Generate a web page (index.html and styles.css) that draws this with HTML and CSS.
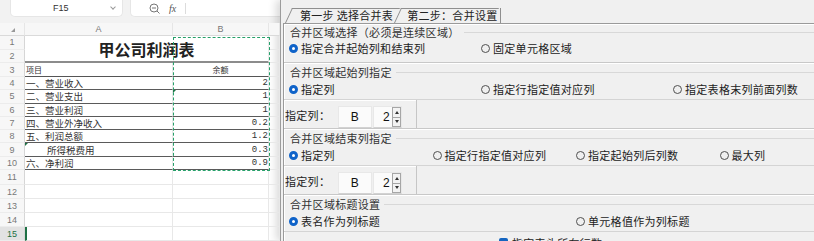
FILE: index.html
```html
<!DOCTYPE html>
<html lang="zh-CN">
<head>
  <meta charset="UTF-8" />
  <meta name="viewport" content="width=device-width, initial-scale=1.0"/>
  <title>合并设置</title>
  <link rel="stylesheet" href="styles.css">
</head>
<body>

  <!-- spreadsheet behind the dialog -->
  <div class="sheet">
    <div class="toolbar">
      <div class="namebox">
        <span>F15</span>
        <span class="chev"></span>
      </div>
      <div class="formula">
        <svg class="zoom-icon" width="11" height="11" viewBox="0 0 11 11">
          <circle cx="5" cy="5" r="4" />
          <line x1="3" y1="5" x2="7" y2="5" />
          <line x1="8" y1="8" x2="10.5" y2="10.5" />
        </svg>
        <span class="fx">fx</span>
        <span class="bar"></span>
      </div>
    </div>

    <div class="grid">
      <div class="corner"><span class="tri"></span></div>
      <div class="colhead">A</div>
      <div class="colhead">B</div>
      <div class="colhead"></div>

      <div class="rh">1</div>
      <div class="cell title">甲公司利润表</div>
      <div class="cell"></div>
      <div class="rh">2</div>
      <div class="cell"></div>

      <div class="rh">3</div>
      <div class="cell head">项目</div>
      <div class="cell head center">余额</div>
      <div class="cell"></div>

      <div class="rh">4</div>
      <div class="cell line">一、营业收入</div>
      <div class="cell line num">2</div>
      <div class="cell"></div>

      <div class="rh">5</div>
      <div class="cell line">二、营业支出</div>
      <div class="cell line num mark">1</div>
      <div class="cell"></div>

      <div class="rh">6</div>
      <div class="cell line">三、营业利润</div>
      <div class="cell line num">1</div>
      <div class="cell"></div>

      <div class="rh">7</div>
      <div class="cell line">四、营业外净收入</div>
      <div class="cell line num">0.2</div>
      <div class="cell"></div>

      <div class="rh">8</div>
      <div class="cell line">五、利润总额</div>
      <div class="cell line num">1.2</div>
      <div class="cell"></div>

      <div class="rh">9</div>
      <div class="cell line indent mark">所得税费用</div>
      <div class="cell line num">0.3</div>
      <div class="cell"></div>

      <div class="rh">10</div>
      <div class="cell line">六、净利润</div>
      <div class="cell line num">0.9</div>
      <div class="cell"></div>

      <div class="rh">11</div><div class="cell"></div><div class="cell"></div><div class="cell"></div>
      <div class="rh">12</div><div class="cell"></div><div class="cell"></div><div class="cell"></div>
      <div class="rh">13</div><div class="cell"></div><div class="cell"></div><div class="cell"></div>
      <div class="rh">14</div><div class="cell"></div><div class="cell"></div><div class="cell"></div>
      <div class="rh sel">15</div><div class="cell active-row"></div><div class="cell"></div><div class="cell"></div>

      <div class="marquee"></div>
    </div>
  </div>

  <!-- merge wizard -->
  <div class="dialog">
    <div class="tabs">
      <div class="tab">第一步 选择合并表</div>
      <div class="tab active">第二步：合并设置</div>
    </div>

    <div class="panel">
      <div class="group first">
        <div class="legend">合并区域选择（必须是连续区域）</div>
        <div class="opts cols3">
          <label class="radio"><span class="dot on"></span>指定合并起始列和结束列</label>
          <label class="radio"><span class="dot"></span>固定单元格区域</label>
        </div>
      </div>

      <div class="group">
        <div class="legend">合并区域起始列指定</div>
        <div class="opts cols3">
          <label class="radio"><span class="dot on"></span>指定列</label>
          <label class="radio"><span class="dot"></span>指定行指定值对应列</label>
          <label class="radio"><span class="dot"></span>指定表格末列前面列数</label>
        </div>
        <div class="subrow">
          <div class="field">
            <span class="flabel">指定列：</span>
            <span class="input col">B</span>
            <span class="input num">2<span class="spin"><i class="up"></i><i class="down"></i></span></span>
          </div>
        </div>
      </div>

      <div class="group">
        <div class="legend">合并区域结束列指定</div>
        <div class="opts cols4">
          <label class="radio"><span class="dot on"></span>指定列</label>
          <label class="radio"><span class="dot"></span>指定行指定值对应列</label>
          <label class="radio"><span class="dot"></span>指定起始列后列数</label>
          <label class="radio"><span class="dot"></span>最大列</label>
        </div>
        <div class="subrow">
          <div class="field">
            <span class="flabel">指定列：</span>
            <span class="input col">B</span>
            <span class="input num">2<span class="spin"><i class="up"></i><i class="down"></i></span></span>
          </div>
        </div>
      </div>

      <div class="group">
        <div class="legend">合并区域标题设置</div>
        <div class="opts cols2">
          <label class="radio"><span class="dot on"></span>表名作为列标题</label>
          <label class="radio"><span class="dot"></span>单元格值作为列标题</label>
        </div>
        <div class="subrow check">
          <span class="cb"></span>
          <span class="cb-text">指定表头所在行数</span>
        </div>
      </div>
    </div>
  </div>

</body>
</html>
```

FILE: styles.css
```css
body {
  margin: 0;
  width: 814px;
  height: 241px;
  overflow: hidden;
  display: flex;
  font-family: "Noto Sans CJK SC", sans-serif;
  background: #fff;
}

/* ---------- spreadsheet ---------- */

.sheet {
  width: 280px;
  flex: none;
  overflow: hidden;
  background: #fff;
}

.toolbar {
  height: 23px;
  display: flex;
  background: #f2f2f2;
}

.namebox {
  margin-left: 10px;
  width: 113px;
  height: 17px;
  box-sizing: border-box;
  display: flex;
  align-items: center;
  padding-left: 42px;
  background: #fff;
  border: 1px solid #e6e6e6;
  border-top: none;
  border-radius: 0 0 5px 5px;
  font: 9px "Liberation Sans", sans-serif;
  color: #333;
}

.chev {
  margin-left: auto;
  margin-right: 7px;
  margin-top: -3px;
  width: 3px;
  height: 3px;
  border-right: 1px solid #999;
  border-bottom: 1px solid #999;
  transform: rotate(45deg);
}

.formula {
  margin-left: 7px;
  flex: 1;
  height: 17px;
  box-sizing: border-box;
  display: flex;
  align-items: center;
  padding-left: 18px;
  background: #fff;
  border: 1px solid #e6e6e6;
  border-top: none;
  border-right: none;
  border-radius: 0 0 0 5px;
}

.zoom-icon {
  fill: none;
  stroke: #777;
  stroke-width: 1;
}

.fx {
  margin-left: 9px;
  font: italic 10px "Liberation Serif", serif;
  color: #555;
}

.bar {
  margin-left: 9px;
  width: 1px;
  height: 11px;
  background: #dcdcdc;
}

.grid {
  position: relative;
  display: grid;
  grid-template-columns: 25px 148px 96px 11px;
  grid-template-rows: 13px 13.7px 13.7px 13.6px repeat(7, 13.3px) 15px 14px 14px 14px 14px;
  font-size: 9.5px;
  color: #333;
}

.grid > div {
  box-sizing: border-box;
  display: flex;
  align-items: center;
  overflow: hidden;
  white-space: nowrap;
}

.corner, .colhead {
  background: #f7f7f7;
  border-bottom: 1px solid #dadada;
  border-right: 1px solid #e6e6e6;
  justify-content: center;
  font: 9px "Liberation Sans", sans-serif;
  color: #777;
}

.tri {
  width: 0;
  height: 0;
  border-left: 4px solid transparent;
  border-bottom: 4px solid #999;
  margin-left: 2px;
  margin-top: 2px;
}

.rh {
  justify-content: center;
  background: #f7f7f7;
  border-right: 1px solid #d6d6d6;
  border-bottom: 1px solid #ececec;
  font: 9px "Liberation Sans", sans-serif;
  color: #777;
}

.rh.sel {
  background: #e2e2e2;
  color: #1e7145;
}

.cell {
  position: relative;
  padding: 0 1px;
  border-right: 1px solid #e8e8e8;
  border-bottom: 1px solid #e8e8e8;
}

.title {
  grid-column: span 2;
  grid-row: span 2;
  justify-content: center;
  font-size: 16px;
  font-weight: bold;
  color: #222;
  border-bottom: 2px solid #8c8c8c;
}

.head {
  font-size: 8px;
  border-bottom-color: #555;
}

.center {
  justify-content: center;
}

.line {
  border-bottom-color: #5a5a5a;
}

.num {
  justify-content: flex-end;
  padding-right: 0;
  font: 9px "Liberation Mono", monospace;
}

.indent {
  padding-left: 22px;
}

.mark::before {
  content: "";
  position: absolute;
  left: 0;
  top: 0;
  border-top: 3px solid #1e7145;
  border-right: 3px solid transparent;
}

.active-row {
  border-left: 2px solid #1e7145;
}

.marquee {
  position: absolute;
  left: 173px;
  top: 14px;
  width: 97px;
  height: 134px;
  box-sizing: border-box;
  border: 1px dashed #27a06a;
  pointer-events: none;
}

/* ---------- dialog ---------- */

.dialog {
  flex: 1;
  min-width: 0;
  display: flex;
  flex-direction: column;
  overflow: hidden;
  padding: 8px 0 0 2px;
  background: #f0f0f0;
  border-left: 1px solid #9c9c9c;
  box-shadow: -4px 0 8px rgba(0, 0, 0, 0.15);
  font-size: 11px;
  letter-spacing: 0.3px;
  color: #222;
}

.tabs {
  display: flex;
  flex: none;
  height: 15px;
  padding-left: 2px;
}

.tab {
  position: relative;
  z-index: 0;
  height: 15px;
  line-height: 15px;
  padding: 0 7px 0 15px;
  border-right: 1px solid #8f8f8f;
  white-space: nowrap;
}

.tab::before {
  content: "";
  position: absolute;
  z-index: -1;
  left: 0;
  right: 7px;
  top: 0;
  bottom: 0;
  background: #f0f0f0;
  border-top: 1px solid #8f8f8f;
  border-left: 1px solid #8f8f8f;
  transform: skewX(-25deg);
  transform-origin: bottom left;
}

.tab:first-child {
  border-right: none;
}

.tab.active {
  z-index: 1;
  margin-left: -6px;
  padding: 0 2px 0 13px;
}

.panel {
  flex: 1;
  min-height: 0;
  border-top: 1px solid #9a9a9a;
  border-left: 1px solid #9a9a9a;
  box-shadow: inset 1px 1px 0 #fff;
  overflow: hidden;
}

.group {
  padding-top: 2px;
  border-bottom: 1px solid #c8c8c8;
  box-shadow: 0 1px 0 #fff;
}

.group.first {
  padding-top: 1px;
  padding-bottom: 6px;
}

.group.first .opts {
  margin-top: 1px;
}

.legend {
  display: flex;
  align-items: center;
  height: 14px;
  line-height: 14px;
  padding-left: 6px;
  color: #333;
  white-space: nowrap;
}

.legend::after {
  content: "";
  flex: 1;
  height: 1px;
  margin-left: 4px;
  background: #d8d8d8;
}

.opts {
  display: grid;
  align-items: center;
  height: 16px;
  margin-top: 2px;
  padding-left: 5px;
}

.cols2 { grid-template-columns: repeat(2, 287px); }
.cols3 { grid-template-columns: repeat(3, 192px); }
.cols4 { grid-template-columns: repeat(4, 143.5px); }

.radio {
  display: flex;
  align-items: center;
  gap: 3px;
  white-space: nowrap;
}

.dot {
  flex: none;
  width: 9px;
  height: 9px;
  box-sizing: border-box;
  border-radius: 50%;
  border: 1px solid #505050;
}

.dot.on {
  border: 3px solid #0f63c9;
  background: #fff;
}

.subrow {
  display: flex;
  height: 29px;
  box-sizing: border-box;
  margin-top: 2px;
  border-top: 1px solid #d4d4d4;
}

.field {
  width: 131px;
  display: flex;
  padding-left: 1px;
  border-right: 1px solid #c6c6c6;
  box-shadow: inset 0 1px 0 #fff;
}

.flabel {
  width: 53px;
  align-self: center;
  margin-top: 2px;
  white-space: nowrap;
}

.input {
  margin-top: 6px;
  height: 22px;
  box-sizing: border-box;
  display: flex;
  align-items: center;
  background: #fbfbfb;
  border: 1px solid #e8e8e8;
  border-bottom-color: #d2d2d2;
  font: 12px "Liberation Sans", sans-serif;
  color: #111;
}

.input.col {
  width: 34px;
  justify-content: center;
}

.input.num {
  width: 29px;
  margin-left: 1px;
  justify-content: flex-end;
}

.spin {
  display: flex;
  flex-direction: column;
  width: 9px;
  height: 20px;
  margin-left: 2px;
  box-sizing: border-box;
  background: #f3f3f3;
  border: 1px solid #a6a6a6;
}

.spin i {
  flex: 1;
  display: flex;
  align-items: center;
  justify-content: center;
}

.spin i + i {
  border-top: 1px solid #a6a6a6;
}

.spin .up::before {
  content: "";
  border-left: 2.5px solid transparent;
  border-right: 2.5px solid transparent;
  border-bottom: 3px solid #333;
}

.spin .down::before {
  content: "";
  border-left: 2.5px solid transparent;
  border-right: 2.5px solid transparent;
  border-top: 3px solid #333;
}

.subrow.check {
  padding-left: 215px;
  align-items: flex-start;
}

.cb {
  width: 9px;
  height: 9px;
  margin-top: 6px;
  border-radius: 2px;
  background: #1565c0;
}

.cb-text {
  margin-left: 4px;
  margin-top: 3px;
  white-space: nowrap;
}
```
